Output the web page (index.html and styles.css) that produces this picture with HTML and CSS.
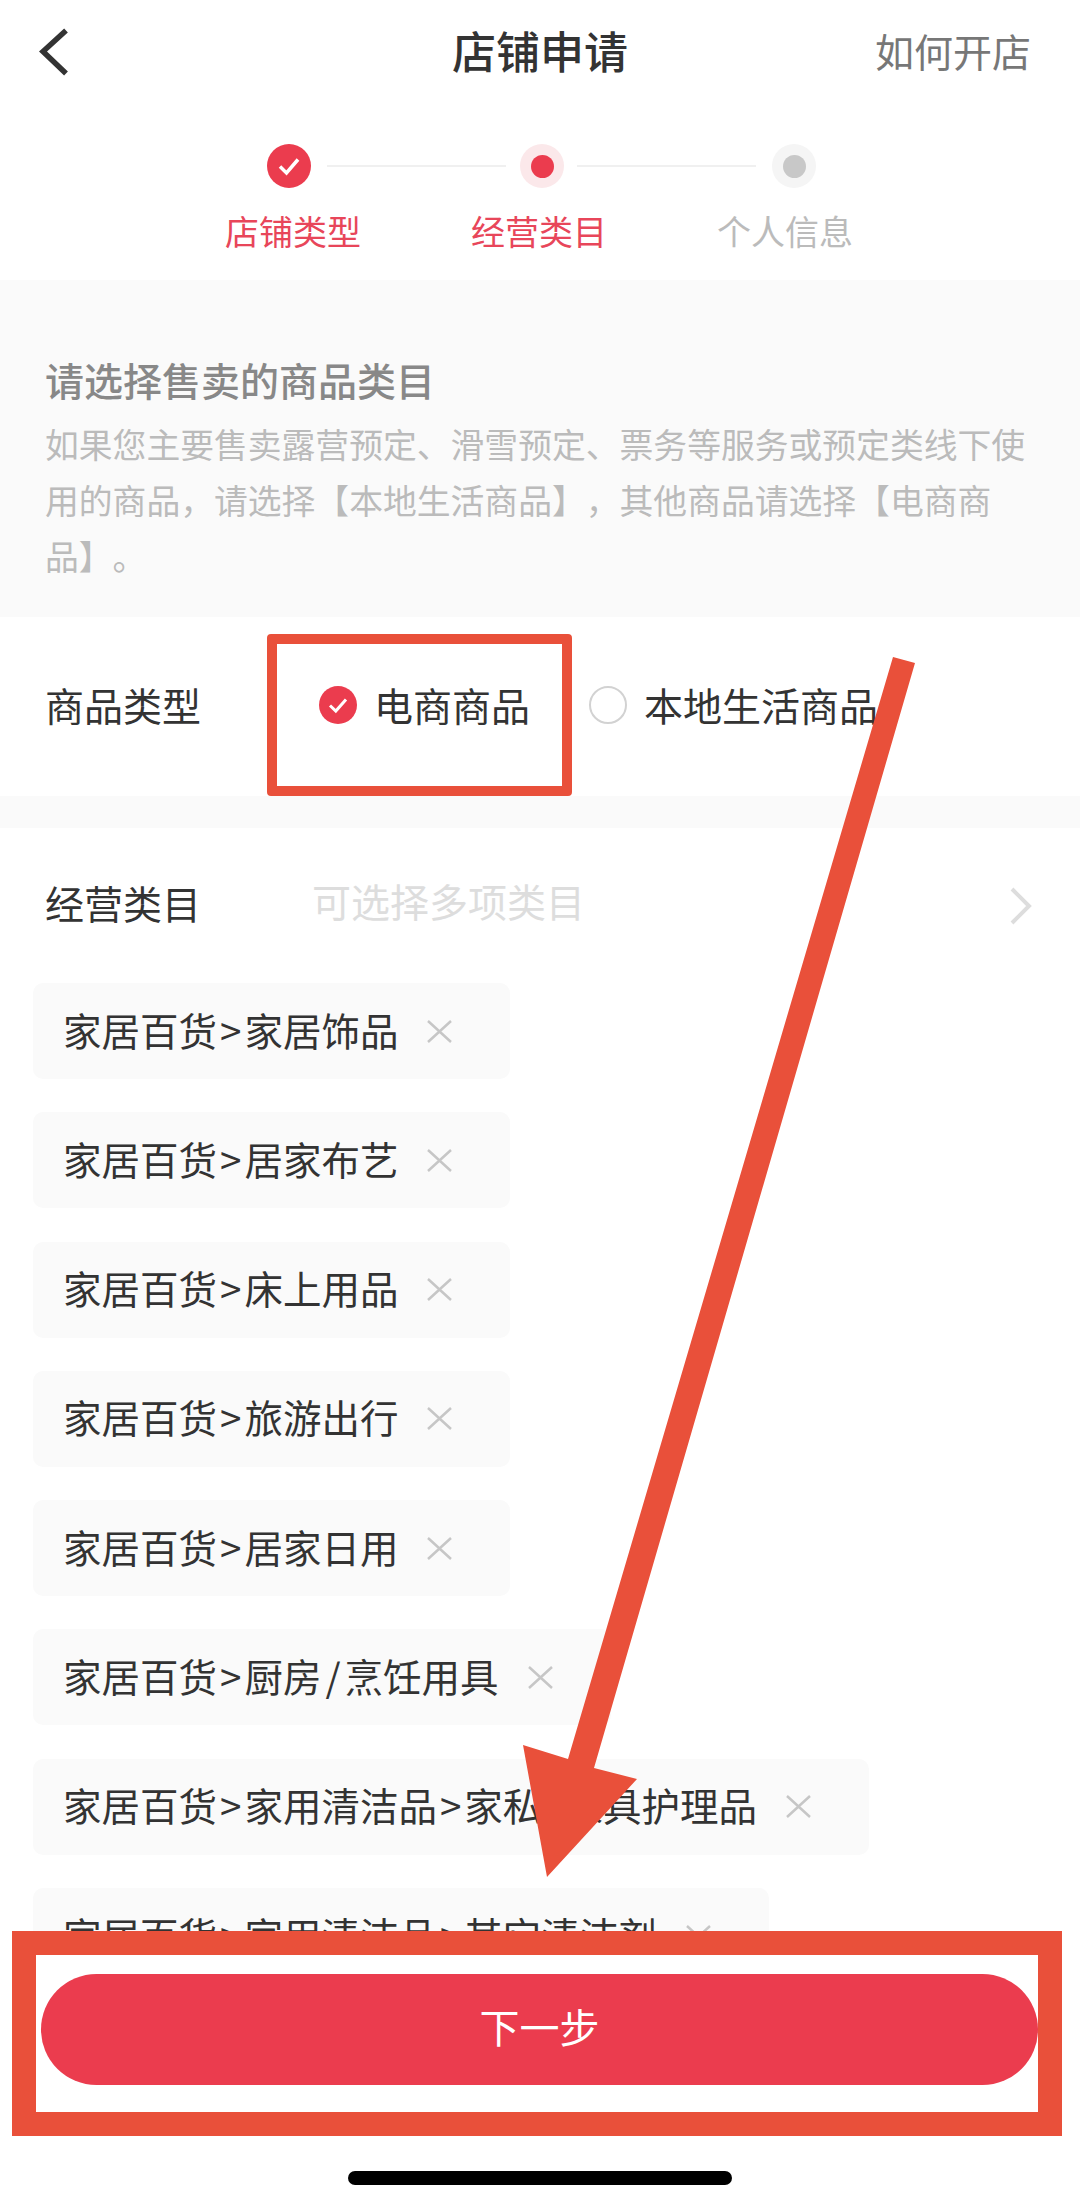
FILE: index.html
```html
<!DOCTYPE html>
<html lang="zh-CN">
<head>
<meta charset="utf-8">
<title>店铺申请</title>
<link rel="stylesheet" href="styles.css">
</head>
<body>
<div class="page">
  <header class="nav">
    <svg class="back" viewBox="0 0 30 48" width="30" height="48"><path d="M27 2.5 4 23.5 27 45.5" fill="none" stroke="#333" stroke-width="5.5"/></svg>
    <h1 class="nav-title">店铺申请</h1>
    <span class="nav-link">如何开店</span>
  </header>

  <section class="steps">
    <div class="step-track">
      <span class="dot dot-done"><svg viewBox="0 0 44 44" width="44" height="44"><path d="M13 22.5 19.500 29 31 15.500" fill="none" stroke="#fff" stroke-width="3.500"/></svg></span>
      <span class="line line-a"></span>
      <span class="dot dot-now"><i></i></span>
      <span class="line line-b"></span>
      <span class="dot dot-next"><i></i></span>
    </div>
    <div class="step-labels">
      <span class="on">店铺类型</span>
      <span class="on">经营类目</span>
      <span class="off">个人信息</span>
    </div>
  </section>

  <section class="intro">
    <h2>请选择售卖的商品类目</h2>
    <p>如果您主要售卖露营预定、滑雪预定、票务等服务或预定类线下使用的商品，请选择【本地生活商品】，其他商品请选择【电商商品】。</p>
  </section>

  <section class="type-row">
    <span class="type-label">商品类型</span>
    <div class="mark-box">
      <span class="radio radio-on"><svg viewBox="0 0 38 38" width="38" height="38"><path d="M11 19.500 16.800 25 27 13.500" fill="none" stroke="#fff" stroke-width="3"/></svg></span>
      <span>电商商品</span>
    </div>
    <div class="radio-item">
      <span class="radio radio-off"></span>
      <span>本地生活商品</span>
    </div>
  </section>

  <div class="band"></div>

  <section class="cat-row">
    <span class="cat-label">经营类目</span>
    <span class="cat-hint">可选择多项类目</span>
    <svg class="cat-arrow" viewBox="0 0 22 38" width="22" height="38"><path d="M2 2 19 19 2 36" fill="none" stroke="#ddd" stroke-width="4"/></svg>
  </section>

  <section class="tags">
    <div class="tag"><span>家居百货<b class="gt">&gt;</b>家居饰品</span><svg class="x" viewBox="0 0 25 23" width="25" height="23"><path d="M1 1 24 22M24 1 1 22"/></svg></div>
    <div class="tag"><span>家居百货<b class="gt">&gt;</b>居家布艺</span><svg class="x" viewBox="0 0 25 23" width="25" height="23"><path d="M1 1 24 22M24 1 1 22"/></svg></div>
    <div class="tag"><span>家居百货<b class="gt">&gt;</b>床上用品</span><svg class="x" viewBox="0 0 25 23" width="25" height="23"><path d="M1 1 24 22M24 1 1 22"/></svg></div>
    <div class="tag"><span>家居百货<b class="gt">&gt;</b>旅游出行</span><svg class="x" viewBox="0 0 25 23" width="25" height="23"><path d="M1 1 24 22M24 1 1 22"/></svg></div>
    <div class="tag"><span>家居百货<b class="gt">&gt;</b>居家日用</span><svg class="x" viewBox="0 0 25 23" width="25" height="23"><path d="M1 1 24 22M24 1 1 22"/></svg></div>
    <div class="tag"><span>家居百货<b class="gt">&gt;</b>厨房<b class="slash">/</b>烹饪用具</span><svg class="x" viewBox="0 0 25 23" width="25" height="23"><path d="M1 1 24 22M24 1 1 22"/></svg></div>
    <div class="tag"><span>家居百货<b class="gt">&gt;</b>家用清洁品<b class="gt">&gt;</b>家私<b class="slash">/</b>家具护理品</span><svg class="x" viewBox="0 0 25 23" width="25" height="23"><path d="M1 1 24 22M24 1 1 22"/></svg></div>
    <div class="tag"><span>家居百货<b class="gt">&gt;</b>家用清洁品<b class="gt">&gt;</b>其它清洁剂</span><svg class="x" viewBox="0 0 25 23" width="25" height="23"><path d="M1 1 24 22M24 1 1 22"/></svg></div>
  </section>

  <footer class="foot">
    <div class="foot-box">
      <button class="next"><span>下一步</span></button>
    </div>
    <div class="home"></div>
  </footer>

  <svg class="arrow" viewBox="0 0 1080 2207" width="1080" height="2207"><polygon points="893,657 915,663 594,1768 637,1779 547,1877 523,1745 568,1759"/></svg>
</div>
</body>
</html>
```
FILE: styles.css
```css
* { box-sizing: border-box; margin: 0; padding: 0; }
html, body { width: 1080px; height: 2207px; background: #fff; }
body {
  font-family: "Noto Sans CJK SC", "Liberation Sans", sans-serif;
  font-weight: 400;
  color: #333;
  text-spacing-trim: space-all;
}
.page {
  position: relative;
  width: 1080px;
  height: 2207px;
  overflow: hidden;
  display: flex;
  flex-direction: column;
}

/* nav */
.nav {
  position: relative;
  flex: none;
  height: 105px;
  padding-bottom: 6px;
  display: flex;
  align-items: center;
  justify-content: center;
}
.back { position: absolute; left: 39px; top: 28px; }
.nav-title { font-size: 44px; font-weight: 500; line-height: 56px; color: #333; }
.nav-link { position: absolute; right: 49px; top: 22px; font-size: 39px; line-height: 56px; color: #777; }

/* steps */
.steps { flex: none; height: 175px; padding-top: 39px; }
.step-track { display: flex; align-items: center; padding-left: 267px; }
.dot { flex: none; width: 44px; height: 44px; border-radius: 50%; display: flex; align-items: center; justify-content: center; }
.dot i { display: block; width: 23px; height: 23px; border-radius: 50%; }
.dot-done { background: #eb3c4e; }
.dot-now { background: #fbe8ea; margin-left: 14px; }
.dot-now i { background: #eb3c4e; }
.dot-next { background: #f5f5f5; margin-left: 16px; }
.dot-next i { background: #c8c8c8; }
.line { height: 2px; width: 179px; background: #f0f0f0; }
.line-a { margin-left: 16px; }
.line-b { margin-left: 13px; }
.step-labels { display: flex; gap: 111px; padding-left: 225px; margin-top: 20px; font-size: 34px; line-height: 46px; }
.step-labels span { width: 135px; white-space: nowrap; }
.step-labels .on { color: #e8465a; }
.step-labels .off { color: #bbb; }

/* intro */
.intro { flex: none; height: 337px; background: #fafafa; padding: 71px 45px 0; }
.intro h2 { font-size: 39px; font-weight: 500; line-height: 56px; color: #888; }
.intro p { margin-top: 9px; font-size: 33.8px; line-height: 56px; color: #bbb; }

/* type */
.type-row { flex: none; height: 179px; display: flex; align-items: flex-start; font-size: 39px; line-height: 56px; }
.type-label { width: 267px; padding-left: 45px; margin-top: 59px; }
.mark-box {
  width: 305px;
  height: 162px;
  margin-top: 17px;
  border: 10px solid #e9503a;
  border-radius: 4px;
  padding: 32px 0 0 42px;
  display: flex;
  align-items: flex-start;
  gap: 17px;
}
.radio { flex: none; width: 38px; height: 38px; border-radius: 50%; margin-top: 10px; display: block; }
.radio svg { display: block; }
.radio-on { background: #eb3c4e; }
.radio-off { border: 2.5px solid #d2d2d2; }
.radio-item { display: flex; align-items: flex-start; gap: 17px; margin: 59px 0 0 17px; }

.band { flex: none; height: 32px; background: #fafafa; }

/* category row */
.cat-row { flex: none; height: 155px; display: flex; align-items: center; padding: 0 48px 0 45px; font-size: 39px; white-space: nowrap; }
.cat-label { width: 155px; flex: none; margin-bottom: 7px; }
.cat-hint { margin: 0 0 11px 112px; color: #ddd; }
.cat-arrow { margin-left: auto; }

/* tags */
.tags {
  flex: 1;
  min-height: 0;
  overflow: hidden;
  padding-left: 33px;
  display: flex;
  flex-direction: column;
  align-items: flex-start;
  gap: 33.3px;
}
.tag {
  flex: none;
  height: 96px;
  display: flex;
  align-items: center;
  padding: 0 58px 0 30px;
  background: #fafafa;
  border-radius: 10px;
  font-size: 38.5px;
  white-space: nowrap;
}
.tag > span { margin-bottom: 5px; }
.gt { font-weight: 400; padding: 0 3px; }
.slash { font-weight: 400; padding: 0 4px; }
.x { flex: none; margin-left: 29px; fill: none; stroke: #c6c6c6; stroke-width: 2.500; }

/* footer */
.foot { flex: none; height: 276px; background: #fff; position: relative; }
.foot-box {
  width: 1050px;
  height: 205px;
  margin-left: 12px;
  border: 24px solid #e9503a;
  padding: 19px 0 0 5px;
  background: #fff;
}
.next {
  display: block;
  width: 997px;
  height: 111px;
  padding-bottom: 7px;
  border: 0;
  border-radius: 56px;
  background: #eb3c4e;
  color: #fff;
  font: 400 40px "Noto Sans CJK SC", sans-serif;
}
.home { width: 384px; height: 14px; margin: 35px 0 0 348px; background: #000; border-radius: 7px; }

/* annotation */
.arrow { position: absolute; left: 0; top: 0; pointer-events: none; }
.arrow polygon { fill: #e9503a; }
```
